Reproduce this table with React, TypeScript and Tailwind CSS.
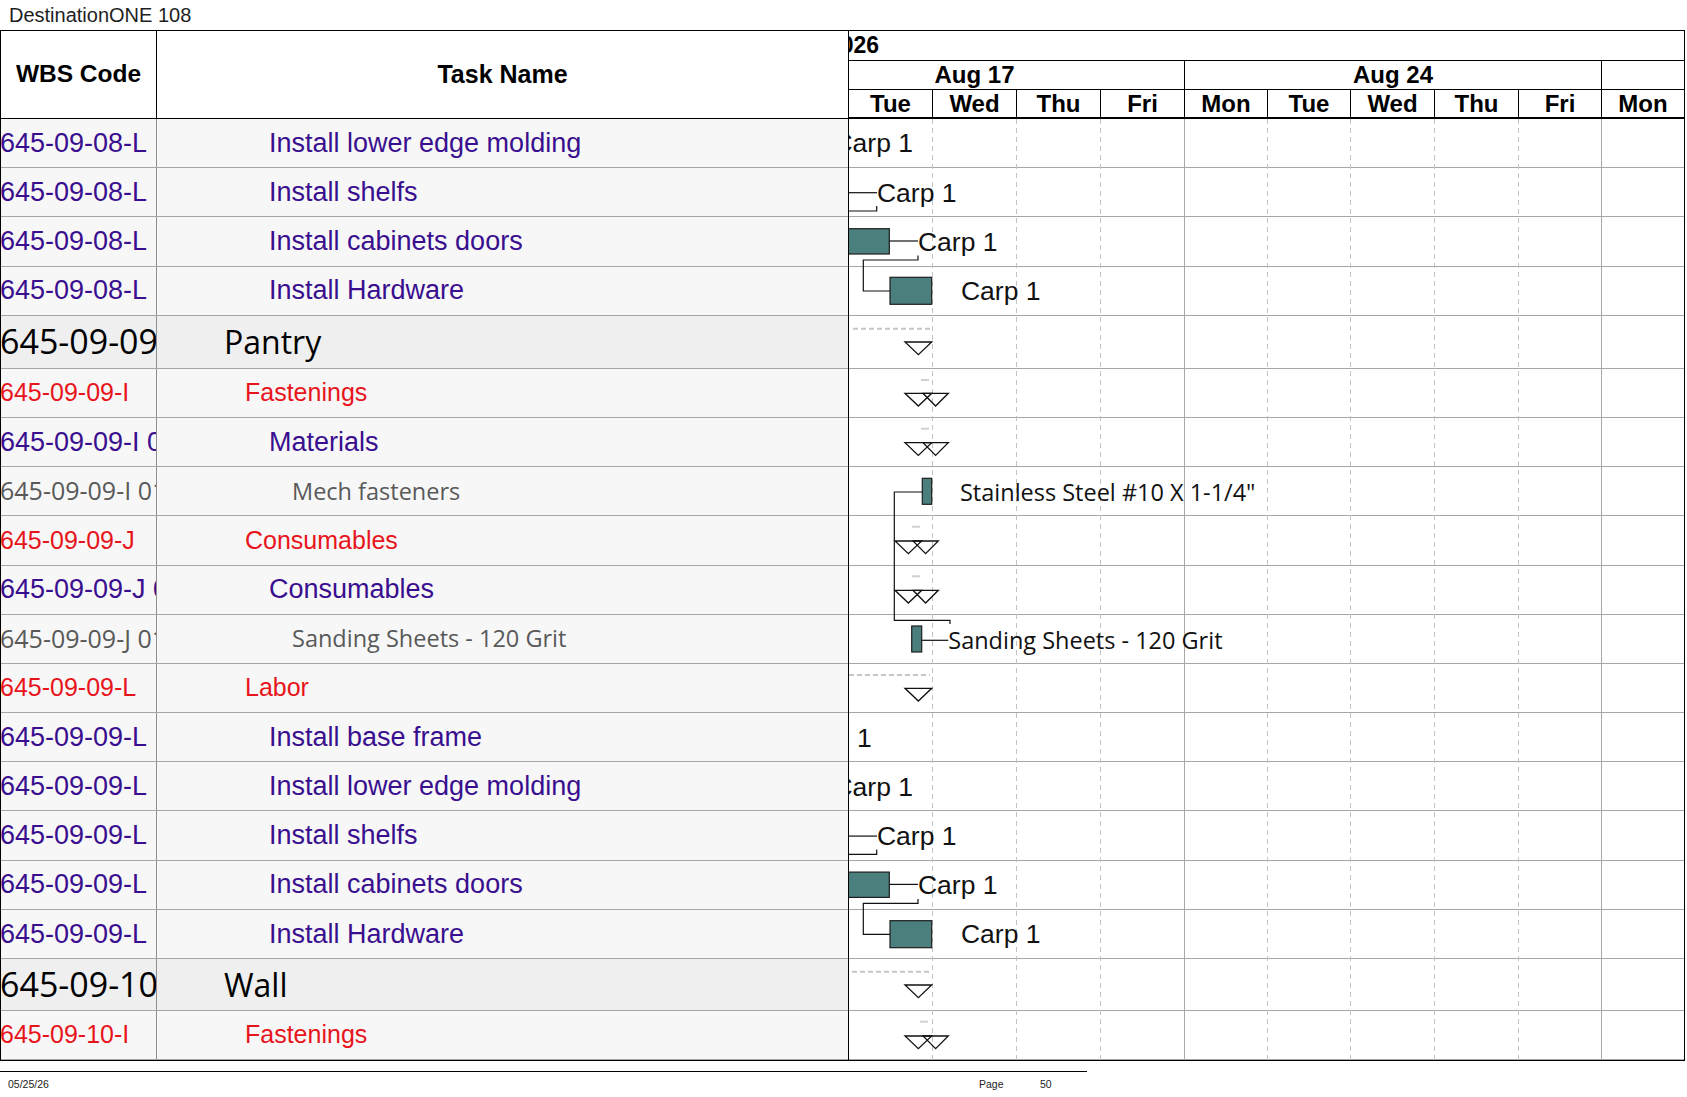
import React from 'react'

/**
 * Gantt print page: WBS table on the left, timeline on the right.
 */

type Kind = 'task' | 'phase' | 'item' | 'group'

type Row = {
  code: string
  name: string
  kind: Kind
  height?: string
}

const rows: Row[] = [
  { code: '645-09-08-L', name: 'Install lower edge molding', kind: 'task' },
  { code: '645-09-08-L', name: 'Install shelfs', kind: 'task' },
  { code: '645-09-08-L', name: 'Install cabinets doors', kind: 'task' },
  { code: '645-09-08-L', name: 'Install Hardware', kind: 'task' },
  { code: '645-09-09', name: 'Pantry', kind: 'group', height: 'h-[53px]' },
  { code: '645-09-09-I', name: 'Fastenings', kind: 'phase' },
  { code: '645-09-09-I 01', name: 'Materials', kind: 'task' },
  { code: '645-09-09-I 01.01', name: 'Mech fasteners', kind: 'item' },
  { code: '645-09-09-J', name: 'Consumables', kind: 'phase' },
  { code: '645-09-09-J 01', name: 'Consumables', kind: 'task' },
  { code: '645-09-09-J 01.01', name: 'Sanding Sheets - 120 Grit', kind: 'item' },
  { code: '645-09-09-L', name: 'Labor', kind: 'phase' },
  { code: '645-09-09-L', name: 'Install base frame', kind: 'task' },
  { code: '645-09-09-L', name: 'Install lower edge molding', kind: 'task' },
  { code: '645-09-09-L', name: 'Install shelfs', kind: 'task' },
  { code: '645-09-09-L', name: 'Install cabinets doors', kind: 'task' },
  { code: '645-09-09-L', name: 'Install Hardware', kind: 'task' },
  { code: '645-09-10', name: 'Wall', kind: 'group', height: 'h-[52px]' },
  { code: '645-09-10-I', name: 'Fastenings', kind: 'phase' },
]

const kindStyles: Record<Kind, { code: string; name: string; bg: string }> = {
  task: {
    code: "font-['Liberation_Sans',Arial,sans-serif] text-[27px] text-[#3a0f8f]",
    name: "pl-[112px] font-['Liberation_Sans',Arial,sans-serif] text-[27px] text-[#3a0f8f]",
    bg: 'bg-[#f7f7f7]',
  },
  phase: {
    code: "font-['Liberation_Sans',Arial,sans-serif] text-[25px] text-[#e8141b]",
    name: "pl-[88px] font-['Liberation_Sans',Arial,sans-serif] text-[25px] text-[#e8141b]",
    bg: 'bg-[#f7f7f7]',
  },
  item: {
    code: "font-['Open_Sans',sans-serif] text-[25px] text-[#595959]",
    name: "pl-[135px] font-['Open_Sans',sans-serif] text-[23.5px] text-[#595959]",
    bg: 'bg-[#f7f7f7]',
  },
  group: {
    code: "font-['Open_Sans',sans-serif] text-[34px] text-black",
    name: "pl-[67px] font-['Open_Sans',sans-serif] text-[32px] text-black",
    bg: 'bg-[#efefef]',
  },
}

// day columns of the timescale (weekends collapsed)
const days = [
  { label: 'Tue', w: 'w-[84px] border-r' },
  { label: 'Wed', w: 'w-[84px] border-r' },
  { label: 'Thu', w: 'w-[84px] border-r' },
  { label: 'Fri', w: 'w-[84px] border-r' },
  { label: 'Mon', w: 'w-[83px] border-r' },
  { label: 'Tue', w: 'w-[83px] border-r' },
  { label: 'Wed', w: 'w-[84px] border-r' },
  { label: 'Thu', w: 'w-[84px] border-r' },
  { label: 'Fri', w: 'w-[83px] border-r' },
  { label: 'Mon', w: 'flex-1' },
]

const gridDashed = [932.5, 1016.5, 1100.5, 1267.5, 1350.5, 1434.5, 1518.5]
const gridSolid = [1184.5, 1601.5]

const arial = 'Liberation Sans, Arial, sans-serif'
const humanist = 'Open Sans, sans-serif'

function Tri({ x, y }: { x: number; y: number }) {
  return (
    <polygon
      points={`${x},${y} ${x + 26.7},${y} ${x + 13.35},${y + 12.7}`}
      fill="none"
      stroke="#111"
      strokeWidth={1.3}
    />
  )
}

function DoubleTri({ x, y }: { x: number; y: number }) {
  return (
    <>
      <Tri x={x} y={y} />
      <polygon
        points={`${x + 18},${y} ${x + 43.3},${y} ${x + 30.6},${y + 12.7}`}
        fill="none"
        stroke="#111"
        strokeWidth={1.3}
      />
    </>
  )
}

function Bar({ x1, x2, y1, y2 }: { x1: number; x2: number; y1: number; y2: number }) {
  return <rect x={x1} y={y1} width={x2 - x1} height={y2 - y1} fill="#4a7f7d" stroke="#1d1d1d" strokeWidth={1.2} />
}

function Label({ x, y, children, end }: { x: number; y: number; children: React.ReactNode; end?: boolean }) {
  return (
    <text x={x} y={y} fontFamily={arial} fontSize={26.5} fill="#111" textAnchor={end ? 'end' : 'start'}>
      {children}
    </text>
  )
}

// the four "Carp 1" labor tasks (install molding / shelfs / doors / hardware)
function LaborBlock({ dy }: { dy: number }) {
  return (
    <g transform={`translate(0 ${dy})`}>
      <Label x={913} y={152.4} end>
        Carp 1
      </Label>

      <line x1={849} y1={192.7} x2={877} y2={192.7} stroke="#111" strokeWidth={1.2} />
      <Label x={877} y={201.7}>
        Carp 1
      </Label>
      <path d="M849 211 H876.7 V206" fill="none" stroke="#111" strokeWidth={1.2} />

      <Bar x1={800} x2={889.3} y1={228.7} y2={254} />
      <line x1={889.3} y1={241} x2={918} y2={241} stroke="#111" strokeWidth={1.2} />
      <Label x={918} y={250.7}>
        Carp 1
      </Label>
      <path d="M918 255.5 V260 H863.3 V291 H890" fill="none" stroke="#111" strokeWidth={1.2} />

      <Bar x1={890} x2={931.7} y1={277.3} y2={304.3} />
      <Label x={961} y={299.7}>
        Carp 1
      </Label>
    </g>
  )
}

function SummaryDash({ x1, x2, y }: { x1: number; x2: number; y: number }) {
  return <line x1={x1} y1={y} x2={x2} y2={y} stroke="#c6c6c6" strokeWidth={2} strokeDasharray="5 3" />
}

function Tick({ x, y }: { x: number; y: number }) {
  return <line x1={x} y1={y} x2={x + 8} y2={y} stroke="#d0d0d0" strokeWidth={2} />
}

function GanttDrawing() {
  return (
    <svg
      className="pointer-events-none absolute left-0 top-0"
      width={835}
      height={941.4}
      viewBox="849 119 835 941.4"
    >
      {gridDashed.map((x) => (
        <line key={x} x1={x} y1={119} x2={x} y2={1061} stroke="#c2c2c2" strokeWidth={1} strokeDasharray="5 4" />
      ))}
      {gridSolid.map((x) => (
        <line key={x} x1={x} y1={119} x2={x} y2={1061} stroke="#a9a9a9" strokeWidth={1} />
      ))}

      <LaborBlock dy={0} />

      <g transform="translate(0 1)">
        {/* Pantry */}
        <SummaryDash x1={853} x2={931.7} y={327.7} />
        <Tri x={905} y={341} />

        {/* Fastenings / Materials */}
        <Tick x={921} y={379} />
        <DoubleTri x={905} y={392.3} />
        <Tick x={921} y={427.7} />
        <DoubleTri x={905} y={441.7} />

        {/* Mech fasteners */}
        <Bar x1={922.3} x2={931.7} y1={477.3} y2={503.3} />
        <path d="M922.3 491 H894.3 V619.3 H950 V623" fill="none" stroke="#111" strokeWidth={1.2} />
        <text x={960} y={500} fontFamily={humanist} fontSize={23.5} fill="#111">
          Stainless Steel #10 X 1-1/4"
        </text>

        {/* Consumables */}
        <Tick x={912} y={525.7} />
        <DoubleTri x={895} y={540} />
        <Tick x={912} y={575.3} />
        <DoubleTri x={895} y={589.3} />

        {/* Sanding sheets */}
        <Bar x1={911.7} x2={921.7} y1={625} y2={651} />
        <line x1={921.7} y1={639.3} x2={948.3} y2={639.3} stroke="#111" strokeWidth={1.2} />
        <text x={948.3} y={647.7} fontFamily={humanist} fontSize={23.5} fill="#111">
          Sanding Sheets - 120 Grit
        </text>

        {/* Labor */}
        <SummaryDash x1={849} x2={930} y={674} />
        <Tri x={905} y={687.3} />

        {/* Install base frame */}
        <Label x={871.7} y={745.7} end>
          Carp 1
        </Label>

        {/* Wall */}
        <SummaryDash x1={852} x2={931.6} y={970.7} />
        <Tri x={905} y={984} />

        {/* Fastenings */}
        <Tick x={920} y={1020.7} />
        <DoubleTri x={905} y={1035} />
      </g>

      <LaborBlock dy={643.4} />
    </svg>
  )
}

export default function App() {
  return (
    <div className="relative h-[1097px] w-[1687px] overflow-hidden bg-white text-black">
      {/* 用紙タイトル */}
      <div className="h-[30px] pl-[9px] pt-[6px] font-['Liberation_Sans',Arial,sans-serif] text-[20px] leading-[19px] text-[#1e1e1e]">
        DestinationONE 108
      </div>

      <div className="flex w-[1685px] border-t border-black">
        {/* WBS table */}
        <div className="w-[848px] border-b border-l border-black">
          <div className="flex h-[88px] border-b border-black bg-white font-['Liberation_Sans',Arial,sans-serif] font-bold">
            <div className="flex w-[156px] items-center justify-center border-r border-black text-[24.5px]">
              WBS Code
            </div>
            <div className="flex flex-1 items-center justify-center text-[25px]">Task Name</div>
          </div>

          {rows.map((row, i) => {
            const s = kindStyles[row.kind]
            return (
              <div
                key={i}
                className={`flex ${row.height ?? 'h-[49.2px]'} border-b border-[#a6a6a6] ${s.bg}`}
              >
                <div
                  className={`flex w-[156px] items-center overflow-hidden whitespace-nowrap border-r border-[#8f8f8f] ${s.code}`}
                >
                  <span className="-ml-[1px]">{row.code}</span>
                </div>
                <div className={`flex flex-1 items-center whitespace-nowrap ${s.name}`}>{row.name}</div>
              </div>
            )
          })}
        </div>

        {/* Timeline */}
        <div className="w-[837px] border-b border-l border-r border-black">
          <div className="font-['Liberation_Sans',Arial,sans-serif] text-[24px] font-bold">
            <div className="flex h-[30px] items-center overflow-hidden whitespace-nowrap border-b border-black text-[23px]">
              <span className="ml-[-21px]">2026</span>
            </div>
            <div className="flex h-[29px] overflow-hidden whitespace-nowrap border-b border-black">
              <div className="ml-[-84px] flex w-[420px] shrink-0 items-center justify-center border-r border-black">
                Aug 17
              </div>
              <div className="flex w-[417px] shrink-0 items-center justify-center border-r border-black">Aug 24</div>
              <div className="flex-1" />
            </div>
            <div className="flex h-[29px] border-b-2 border-black">
              {days.map((d, i) => (
                <div key={i} className={`flex shrink-0 items-center justify-center border-black ${d.w}`}>
                  {d.label}
                </div>
              ))}
            </div>
          </div>

          <div className="relative">
            {rows.map((row, i) => (
              <div key={i} className={`${row.height ?? 'h-[49.2px]'} border-b border-[#a6a6a6] bg-white`} />
            ))}
            <GanttDrawing />
          </div>
        </div>
      </div>

      {/* フッター */}
      <div className="mt-[10px] w-[1087px] border-t border-black font-['Liberation_Sans',Arial,sans-serif] text-[10.5px] leading-[12px] text-[#222]">
        <div className="flex pt-[6px]">
          <span className="w-[979px] pl-[8px]">05/25/26</span>
          <span className="w-[61px]">Page</span>
          <span>50</span>
        </div>
      </div>
    </div>
  )
}
